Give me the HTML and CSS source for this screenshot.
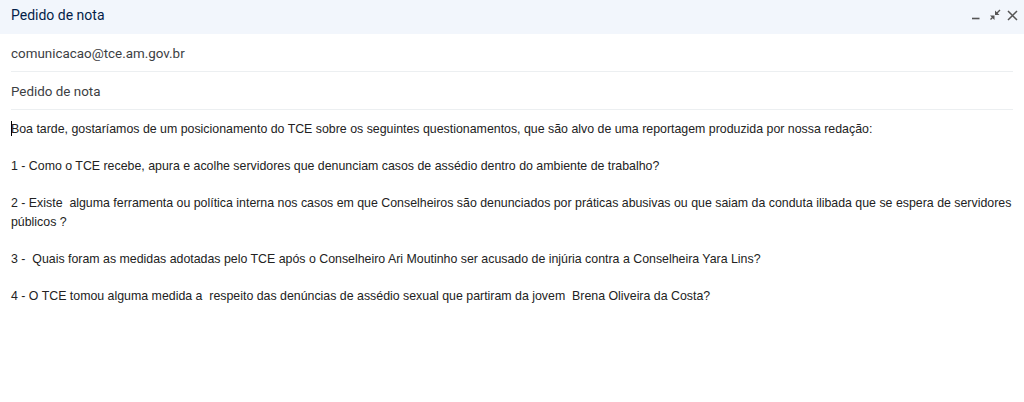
FILE: index.html
```html
<!DOCTYPE html>
<html lang="pt-BR">
<head>
    <meta charset="UTF-8">
    <meta name="viewport" content="width=device-width, initial-scale=1.0">
    <title>Pedido de nota</title>
    <link rel="stylesheet" href="styles.css">
</head>
<body>
    <div class="compose">
        <div class="title-bar">
            <span class="title">Pedido de nota</span>
            <div class="actions">
                <svg class="icon" viewBox="0 0 12 12"><path d="M0 9.500h7.500" stroke="#555" stroke-width="1.600" fill="none"/></svg>
                <svg class="icon" viewBox="0 0 12 12"><path d="M11 1 7.500 4.500M1.500 10.500 4.500 7.500" stroke="#555" stroke-width="1.400" fill="none"/><path d="M6 1.500v4.500h4.500zM5.500 11V6.500H1z" fill="#555"/></svg>
                <svg class="icon" viewBox="0 0 12 12"><path d="M2 2l9 9M11 2l-9 9" stroke="#555" stroke-width="1.500" fill="none"/></svg>
            </div>
        </div>
        <div class="field">comunicacao@tce.am.gov.br</div>
        <div class="field">Pedido de nota</div>
        <div class="body-text">
            <p><span class="caret"></span>Boa tarde, gostaríamos de um posicionamento do TCE sobre os seguintes questionamentos, que são alvo de uma reportagem produzida por nossa redação:</p>
            <p>1 - Como o TCE recebe, apura e acolhe servidores que denunciam casos de assédio dentro do ambiente de trabalho?</p>
            <p>2 - Existe&nbsp; alguma ferramenta ou política interna nos casos em que Conselheiros são denunciados por práticas abusivas ou que saiam da conduta ilibada que se espera de servidores públicos ?</p>
            <p>3 -&nbsp; Quais foram as medidas adotadas pelo TCE após o Conselheiro Ari Moutinho ser acusado de injúria contra a Conselheira Yara Lins?</p>
            <p>4 - O TCE tomou alguma medida a&nbsp; respeito das denúncias de assédio sexual que partiram da jovem&nbsp; Brena Oliveira da Costa?</p>
        </div>
    </div>
</body>
</html>
```

FILE: styles.css
```css
body {
    margin: 0;
    background-color: #fff;
    font-family: "Liberation Sans", Arial, sans-serif;
}

.compose {
    height: 402px;
    overflow: hidden;
}

.title-bar {
    display: flex;
    justify-content: space-between;
    height: 34px;
    padding: 0 6px 0 11px;
    background-color: #f2f6fc;
}

.title {
    font-family: Roboto, sans-serif;
    font-size: 14px;
    line-height: 31px;
    color: #041e49;
}

.actions {
    display: flex;
    gap: 5px;
    padding-top: 9px;
}

.icon {
    width: 12px;
    height: 12px;
}

.field {
    margin: 0 11px;
    height: 38px;
    padding-top: 1px;
    line-height: 37px;
    box-sizing: border-box;
    border-bottom: 1px solid #eceff1;
    font-family: Roboto, sans-serif;
    font-size: 13.400px;
    color: #3c4043;
}

.field:first-of-type {
    height: 39px;
    line-height: 38px;
}

.body-text {
    padding: 10px 11px 0;
    font-size: 12.370px;
    line-height: 18.600px;
    color: #222;
}

.body-text p {
    margin: 0 0 18.600px;
}

.caret {
    display: inline-block;
    width: 1px;
    height: 15px;
    margin-right: -1px;
    vertical-align: -3px;
    background-color: #000;
}
```
